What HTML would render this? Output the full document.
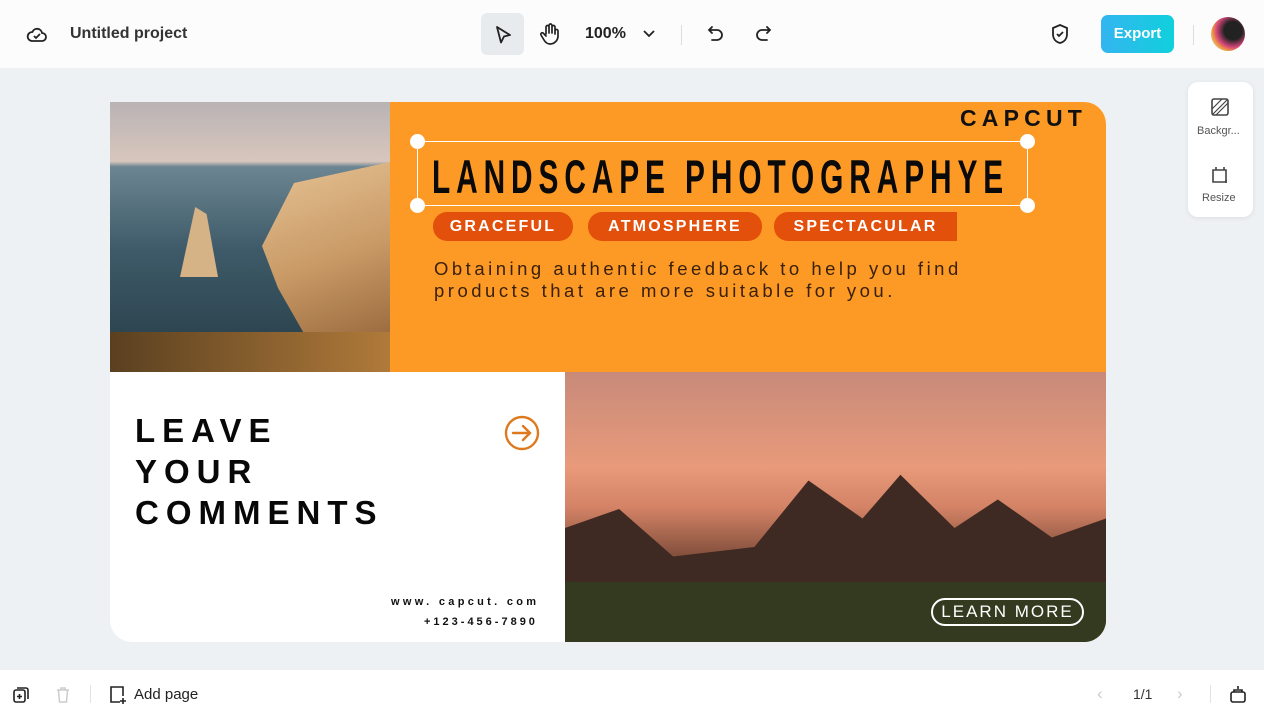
<!DOCTYPE html>
<html><head><meta charset="utf-8"><style>
*{margin:0;padding:0;box-sizing:border-box}
body{width:1264px;height:712px;overflow:hidden;background:#eef1f4;font-family:"Liberation Sans",sans-serif;position:relative}
.abs{position:absolute}
.top{left:0;top:0;width:1264px;height:68px;background:#fcfcfd}
.bot{left:0;top:670px;width:1264px;height:42px;background:#fff}
.t{color:#1f2329}
.tag{position:absolute;top:212px;height:29px;background:#e2500c;border-radius:14px;color:#fff;font-weight:bold;font-size:16px;letter-spacing:2.2px;line-height:29px;text-align:center}
</style></head><body>
<div class="abs top"></div>
<svg class="abs" style="left:25px;top:23px" width="24" height="24" viewBox="0 0 24 24" fill="none" stroke="#222" stroke-width="1.8"><path d="M7 18h10a4 4 0 0 0 0-8 5 5 0 0 0-9.6-1A4.5 4.5 0 0 0 7 18z"/><path d="M9 13l2 2 4-4"/></svg>
<div class="abs t" style="left:70px;top:25px;font-size:16px;font-weight:bold;color:#333">Untitled project</div>
<div class="abs" style="left:481px;top:13px;width:43px;height:42px;background:#e8ebee;border-radius:6px"></div>
<svg class="abs" style="left:492px;top:24px" width="22" height="22" viewBox="0 0 22 22" fill="none" stroke="#222" stroke-width="1.8" stroke-linejoin="round"><path d="M5 3l13 8-6 1.5-3 6z"/></svg>
<svg class="abs" style="left:538px;top:22px" width="24" height="24" viewBox="0 0 24 24" fill="none" stroke="#222" stroke-width="1.7" stroke-linecap="round"><path d="M8 12V5a1.5 1.5 0 0 1 3 0v6M11 10V3.5a1.5 1.5 0 0 1 3 0V11M14 10V5a1.5 1.5 0 0 1 3 0v7M17 9a1.5 1.5 0 0 1 3 0v5a8 8 0 0 1-8 8c-3 0-4.5-1.5-6-4l-3-5a1.5 1.5 0 0 1 2.6-1.5L8 14"/></svg>
<div class="abs t" style="left:585px;top:25px;font-size:16px;font-weight:bold;color:#222">100%</div>
<svg class="abs" style="left:642px;top:28px" width="14" height="12" viewBox="0 0 14 12" fill="none" stroke="#222" stroke-width="1.8"><path d="M2 3l5 5 5-5"/></svg>
<div class="abs" style="left:681px;top:25px;width:1px;height:20px;background:#ddd"></div>
<svg class="abs" style="left:705px;top:23px" width="22" height="22" viewBox="0 0 22 22" fill="none" stroke="#222" stroke-width="1.8" stroke-linecap="round"><path d="M7 4L4 7l3 3M4 7h8a5 5 0 0 1 0 10H7"/></svg>
<svg class="abs" style="left:752px;top:23px" width="22" height="22" viewBox="0 0 22 22" fill="none" stroke="#222" stroke-width="1.8" stroke-linecap="round"><path d="M15 4l3 3-3 3M18 7h-8a5 5 0 0 0 0 10h5"/></svg>
<svg class="abs" style="left:1049px;top:23px" width="22" height="22" viewBox="0 0 22 22" fill="none" stroke="#222" stroke-width="1.8"><path d="M11 2l7 3v6c0 5-3 8-7 9-4-1-7-4-7-9V5z"/><path d="M8 11l2 2 4-4"/></svg>
<div class="abs" style="left:1101px;top:15px;width:73px;height:38px;border-radius:7px;background:linear-gradient(90deg,#34b5f0,#10d0dc);color:#fff;font-weight:bold;font-size:15px;text-align:center;line-height:38px">Export</div>
<div class="abs" style="left:1193px;top:25px;width:1px;height:20px;background:#ddd"></div>
<div class="abs" style="left:1211px;top:17px;width:34px;height:34px;border-radius:50%;background:radial-gradient(circle at 65% 40%,#222 30%,#d4457a 55%,#f0a040 70%,#ccc 85%)"></div>

<div class="abs" style="left:1188px;top:82px;width:65px;height:135px;background:#fff;border-radius:10px;box-shadow:0 1px 6px rgba(0,0,0,.08)"></div>
<svg class="abs" style="left:1211px;top:98px" width="18" height="18" viewBox="0 0 18 18" fill="none" stroke="#444" stroke-width="1.6"><rect x="1" y="1" width="16" height="16" rx="2"/><path d="M1 11L11 1M5 17L17 5M1 17L17 1" stroke-width="1.2"/></svg>
<div class="abs" style="left:1197px;top:125px;font-size:11px;color:#555">Backgr...</div>
<svg class="abs" style="left:1210px;top:165px" width="20" height="20" viewBox="0 0 20 20" fill="none" stroke="#444" stroke-width="1.6"><path d="M3 5h13v12H3z"/><path d="M6 2v3M14 2v3M16 15v3"/></svg>
<div class="abs" style="left:1202px;top:192px;font-size:11px;color:#555">Resize</div>

<!-- canvas -->
<div class="abs" style="left:110px;top:102px;width:996px;height:540px;border-radius:0 22px 22px 22px;overflow:hidden;background:#fff">
 <div class="abs" style="left:0;top:0;width:280px;height:270px;background:linear-gradient(180deg,#b9b3b5 0%,#d8c6bc 22%,#6c8592 24%,#3e5a68 55%,#253c46 100%)"></div>
 <div class="abs" style="left:120px;top:60px;width:160px;height:210px;background:linear-gradient(160deg,#e9c79a,#c99a66 50%,#8a5a30);clip-path:polygon(40% 10%,100% 0,100% 100%,60% 100%,30% 60%,20% 40%)"></div>
 <div class="abs" style="left:70px;top:105px;width:38px;height:70px;background:#d6b287;clip-path:polygon(40% 0,70% 10%,100% 100%,0 100%)"></div>
 <div class="abs" style="left:0;top:230px;width:280px;height:40px;background:linear-gradient(90deg,#5a4020,#b07a3a)"></div>
 <div class="abs" style="left:280px;top:0;width:716px;height:270px;background:#fd9a25"></div>
 <div class="abs" style="left:850px;top:3px;font-size:23px;font-weight:900;letter-spacing:5.2px;color:#111">CAPCUT</div>
 <div class="abs" style="left:322px;top:50px;font-weight:bold;font-size:47px;line-height:50px;letter-spacing:9.3px;color:#0a0a0a;transform:scaleX(0.635);transform-origin:0 0;white-space:nowrap">LANDSCAPE PHOTOGRAPHYE</div>
 <div class="abs" style="left:307px;top:39px;width:611px;height:65px;border:1.5px solid #fff"></div>
 <div class="abs" style="left:300px;top:32px;width:15px;height:15px;border-radius:50%;background:#fff"></div>
 <div class="abs" style="left:910px;top:32px;width:15px;height:15px;border-radius:50%;background:#fff"></div>
 <div class="abs" style="left:300px;top:96px;width:15px;height:15px;border-radius:50%;background:#fff"></div>
 <div class="abs" style="left:910px;top:96px;width:15px;height:15px;border-radius:50%;background:#fff"></div>
 <div class="tag" style="left:323px;top:110px;width:140px">GRACEFUL</div>
 <div class="tag" style="left:478px;top:110px;width:174px">ATMOSPHERE</div>
 <div class="tag" style="left:664px;top:110px;width:183px;border-radius:14px 0 0 14px">SPECTACULAR</div>
 <div class="abs" style="left:324px;top:156px;font-size:18.5px;letter-spacing:3.5px;line-height:22px;color:#3a200a;white-space:nowrap">Obtaining authentic feedback to help you find<br>products that are more suitable for you.</div>
 <div class="abs" style="left:455px;top:270px;width:541px;height:270px;background:linear-gradient(180deg,#c88a7a 0%,#e89a7a 35%,#d48366 50%,#7a4a38 70%,#3a2a20 85%,#35351e 100%)"></div>
 <div class="abs" style="left:455px;top:350px;width:541px;height:190px;background:#3e2a22;clip-path:polygon(0 40%,10% 30%,20% 55%,35% 50%,45% 15%,55% 35%,62% 12%,72% 40%,80% 25%,90% 45%,100% 35%,100% 100%,0 100%)"></div>
 <div class="abs" style="left:455px;top:480px;width:541px;height:60px;background:#333a1f"></div>
 <div class="abs" style="left:821px;top:496px;width:153px;height:28px;border:2px solid #fff;border-radius:14px;color:#fff;font-size:17px;letter-spacing:2px;text-align:center;line-height:24px">LEARN MORE</div>
 <div class="abs" style="left:25px;top:308px;font-size:33px;font-weight:900;letter-spacing:7px;line-height:41px;color:#080808">LEAVE<br>YOUR<br>COMMENTS</div>
 <svg class="abs" style="left:394px;top:313px" width="36" height="36" viewBox="0 0 36 36" fill="none" stroke="#dd7a1e" stroke-width="2.4" stroke-linecap="round"><circle cx="18" cy="18" r="16"/><path d="M9 18h17M19 11l7 7-7 7"/></svg>
 <div class="abs" style="left:281px;top:494px;font-size:11px;font-weight:bold;letter-spacing:3.3px;color:#111;white-space:nowrap">www. capcut. com</div>
 <div class="abs" style="left:314px;top:514px;font-size:11px;font-weight:bold;letter-spacing:3px;color:#111;white-space:nowrap">+123-456-7890</div>
</div>

<div class="abs bot"></div>
<svg class="abs" style="left:12px;top:686px" width="18" height="18" viewBox="0 0 18 18" fill="none" stroke="#222" stroke-width="1.6"><rect x="2" y="4" width="11" height="12" rx="2"/><path d="M5 2h9a2 2 0 0 1 2 2v9M7.5 8v5M5 10.5h5"/></svg>
<svg class="abs" style="left:55px;top:686px" width="16" height="18" viewBox="0 0 16 18" fill="none" stroke="#ccc" stroke-width="1.5"><path d="M2 4h12M6 4V2h4v2M3.5 4l1 12h7l1-12"/></svg>
<div class="abs" style="left:90px;top:685px;width:1px;height:18px;background:#e3e3e3"></div>
<svg class="abs" style="left:108px;top:685px" width="20" height="20" viewBox="0 0 20 20" fill="none" stroke="#222" stroke-width="1.6"><path d="M12 17H3V2h12v9M15 13v6M12 16h6"/></svg>
<div class="abs" style="left:134px;top:686px;font-size:15px;color:#222">Add page</div>
<div class="abs" style="left:1097px;top:684px;font-size:17px;color:#ccc">‹</div>
<div class="abs" style="left:1133px;top:686px;font-size:14px;color:#333">1/1</div>
<div class="abs" style="left:1177px;top:684px;font-size:17px;color:#ccc">›</div>
<div class="abs" style="left:1210px;top:685px;width:1px;height:18px;background:#e3e3e3"></div>
<svg class="abs" style="left:1229px;top:684px" width="18" height="20" viewBox="0 0 18 20" fill="none" stroke="#222" stroke-width="1.6"><rect x="2" y="8" width="14" height="10" rx="2"/><path d="M5 8V6h8v2M9 2v3"/></svg>
</body></html>
